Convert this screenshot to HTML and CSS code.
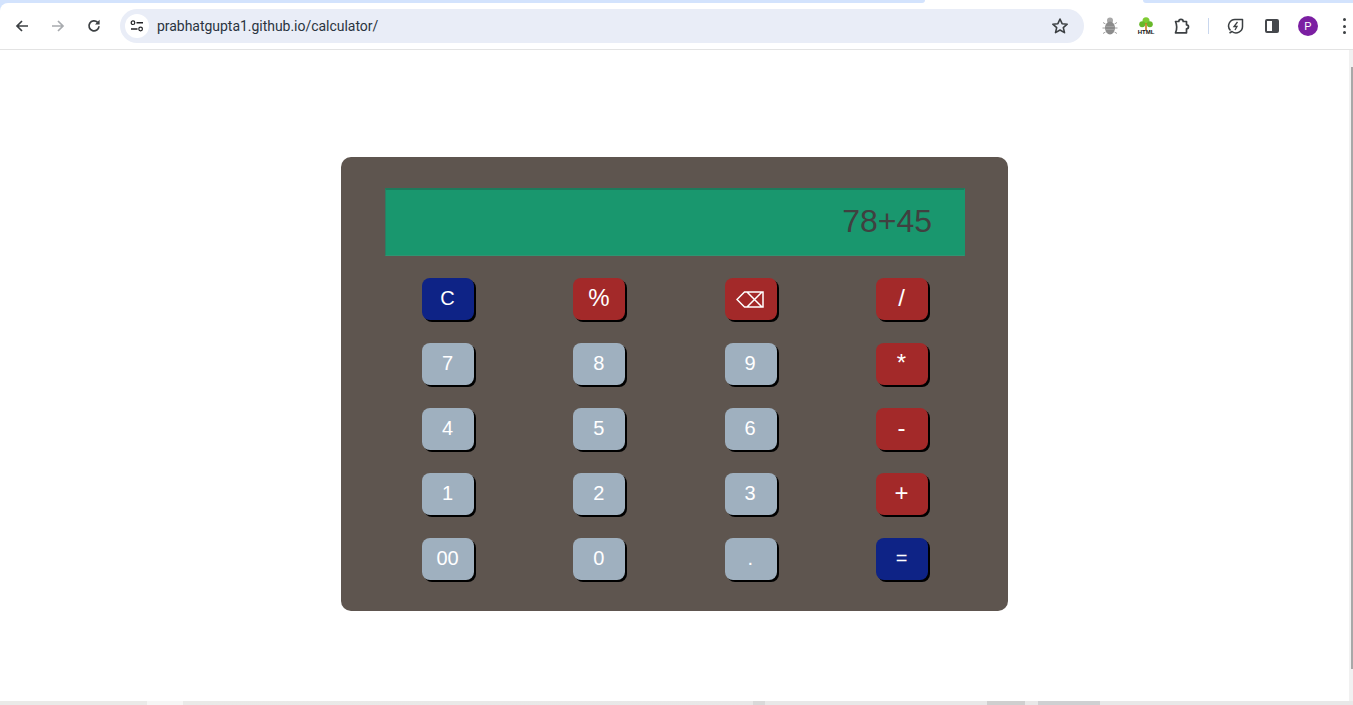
FILE: index.html
```html
<!DOCTYPE html>
<html lang="en">

<head>
    <meta charset="UTF-8">
    <meta name="viewport" content="width=device-width, initial-scale=1.0">
    <title>Calculator</title>
    <link rel="stylesheet" href="styles.css">
</head>

<body>

    <!-- Browser chrome -->
    <div class="chrome">
        <div class="tabstrip">
            <div class="tab-left"></div>
            <div class="tab-active"></div>
            <div class="tab-right"></div>
        </div>

        <div class="toolbar">
            <div class="nav-buttons">
                <svg class="icon" viewBox="0 0 16 16"><path d="M14 8H3M8 3 3 8l5 5" fill="none" stroke="#3c4043" stroke-width="1.7"/></svg>
                <svg class="icon" viewBox="0 0 16 16"><path d="M2 8h11M8 3l5 5-5 5" fill="none" stroke="#a8abaf" stroke-width="1.7"/></svg>
                <svg class="icon" viewBox="0 0 16 16"><path d="M13 8.2A5 5 0 1 1 11.6 4.4" fill="none" stroke="#3c4043" stroke-width="1.7"/><path d="M13.6 1.8v4.6H9z" fill="#3c4043"/></svg>
            </div>
            <div class="omnibox">
                <span class="site-info">
                    <svg viewBox="0 0 14 12" width="14" height="12"><circle cx="3" cy="2.7" r="1.8" fill="none" stroke="#202124" stroke-width="1.2"/><path d="M6.5 2.7h6.5M1 9h6.5" stroke="#202124" stroke-width="1.5"/><circle cx="10.6" cy="9" r="1.8" fill="none" stroke="#202124" stroke-width="1.2"/></svg>
                </span>
                <span class="url">prabhatgupta1.github.io/calculator/</span>
                <svg class="star" viewBox="0 0 18 18"><path d="M9 2l2.1 4.7 5.1.5-3.9 3.4 1.2 5L9 13l-4.5 2.6 1.2-5-3.9-3.4 5.1-.5z" fill="none" stroke="#3c4043" stroke-width="1.6" stroke-linejoin="round"/></svg>
            </div>
            <div class="extensions">
                <svg class="ext-bug" viewBox="0 0 16 20"><circle cx="8" cy="4.5" r="3" fill="#a8a8a8"/><ellipse cx="8" cy="12" rx="5" ry="6.5" fill="#8c8c8c"/><path d="M3.5 8 1 6.5M12.5 8 15 6.5M3 12H.5M13 12h2.5M3.5 16 1 17.5M12.5 16l2.5 1.5" stroke="#a0a0a0" stroke-width="1"/><path d="M3.5 10.5h9M3.2 13.5h9.6" stroke="#a8a8a8" stroke-width=".8"/></svg>
                <svg class="ext-tree" viewBox="0 0 18 18"><circle cx="9" cy="3.8" r="3.5" fill="#7fcb33"/><circle cx="5.2" cy="7.2" r="3" fill="#68b82a"/><circle cx="12.8" cy="7.2" r="3" fill="#68b82a"/><rect x="8.2" y="6" width="1.6" height="7.5" fill="#c77a1b"/><text x="9" y="17" class="tree-label">HTML</text></svg>
                <svg class="ext-puzzle" viewBox="0 0 18 18"><path d="M2.5 4.5h3.3a2.2 2.2 0 0 1 4.4 0h3.3v3.3a2 2 0 0 1 0 4v4H2.5q2.5-5.5 0-11.300z" fill="none" stroke="#3c4043" stroke-width="1.7" stroke-linejoin="round"/></svg>
                <span class="divider"></span>
                <svg class="ext-leaf" viewBox="0 0 18 18"><path d="M3.5 13.500A6.500 6.500 0 0 1 9 2.500h6.500V9A6.500 6.500 0 0 1 5 14.500L2.500 16" fill="none" stroke="#3c4043" stroke-width="1.5" stroke-linejoin="round"/><path d="M10.5 5 7 9.5h3L8 13" fill="none" stroke="#3c4043" stroke-width="1.3"/></svg>
                <span class="side-panel"></span>
                <span class="avatar">P</span>
                <span class="menu-dots"><i></i><i></i><i></i></span>
            </div>
        </div>
    </div>

    <!-- Page -->
    <div class="viewport">
        <div class="page">
            <div class="calculator">
                <div class="display">78+45</div>
                <div class="keys">
                    <button class="key key-blue">C</button>
                    <button class="key key-red key-big">%</button>
                    <button class="key key-red key-big" aria-label="Backspace">
                        <svg class="back-icon" viewBox="0 0 28 17"><path d="M1 8.5 8.5 1H27v15H8.5zM11 1l15 15M26 1 11 16" fill="none" stroke="#fff" stroke-width="1.5"/></svg>
                    </button>
                    <button class="key key-red key-big">/</button>

                    <button class="key">7</button>
                    <button class="key">8</button>
                    <button class="key">9</button>
                    <button class="key key-red key-big">*</button>

                    <button class="key">4</button>
                    <button class="key">5</button>
                    <button class="key">6</button>
                    <button class="key key-red key-big">-</button>

                    <button class="key">1</button>
                    <button class="key">2</button>
                    <button class="key">3</button>
                    <button class="key key-red key-big">+</button>

                    <button class="key">00</button>
                    <button class="key">0</button>
                    <button class="key">.</button>
                    <button class="key key-blue">=</button>
                </div>
            </div>
        </div>
        <div class="scrollbar"><div class="scroll-thumb"></div></div>
    </div>

    <div class="desktop-strip"></div>

</body>

</html>
```

FILE: styles.css
```css
* {
    box-sizing: border-box;
}

body {
    margin: 0;
    height: 705px;
    overflow: hidden;
    display: flex;
    flex-direction: column;
    font-family: "Liberation Sans", Arial, sans-serif;
    background-color: #fff;
}

/* Browser chrome */
.chrome {
    flex: none;
    background: linear-gradient(to right, #d3e3fd 10px, #fff 10px);
}

.tabstrip {
    display: flex;
    height: 3px;
    background-color: #fff;
}

.tab-left {
    width: 925px;
    background-color: #d3e3fd;
    border-bottom-right-radius: 6px;
}

.tab-active {
    width: 218px;
}

.tab-right {
    flex: 1;
    background-color: #d3e3fd;
    border-bottom-left-radius: 6px;
}

.toolbar {
    display: flex;
    align-items: center;
    height: 47px;
    border-bottom: 1px solid #e3e3e3;
    border-top-left-radius: 8px;
    background-color: #fff;
}

.nav-buttons {
    display: flex;
    gap: 20px;
    padding-left: 14px;
    width: 120px;
}

.icon {
    width: 16px;
    height: 16px;
}

.omnibox {
    display: flex;
    align-items: center;
    width: 964px;
    height: 34px;
    padding: 0 15px 0 5px;
    background-color: #e9edf7;
    border-radius: 17px;
}

.site-info {
    display: flex;
    align-items: center;
    justify-content: center;
    width: 24px;
    height: 24px;
    background-color: #fff;
    border-radius: 50%;
}

.url {
    flex: 1;
    margin-left: 8px;
    font-family: Roboto, "Liberation Sans", sans-serif;
    font-size: 14px;
    letter-spacing: -0.03px;
    color: #2b3440;
}

.star {
    width: 18px;
    height: 18px;
}

.extensions {
    display: flex;
    align-items: center;
    flex: 1;
    padding-left: 18px;
}

.ext-bug {
    width: 16px;
    height: 20px;
}

.ext-tree {
    width: 18px;
    height: 18px;
    margin-left: 19px;
}

.tree-label {
    font-family: "Liberation Sans", sans-serif;
    font-size: 6px;
    font-weight: 700;
    text-anchor: middle;
    fill: #111;
}

.ext-puzzle {
    width: 18px;
    height: 18px;
    margin-left: 18px;
}

.divider {
    width: 1px;
    height: 16px;
    margin-left: 17px;
    background-color: #c9d7ee;
}

.ext-leaf {
    width: 18px;
    height: 18px;
    margin-left: 18px;
}

.side-panel {
    width: 14px;
    height: 14px;
    margin-left: 20px;
    border: 2px solid #45484c;
    border-radius: 2px;
    background: linear-gradient(to right, #fff 50%, #45484c 50%);
}

.avatar {
    display: flex;
    align-items: center;
    justify-content: center;
    width: 20px;
    height: 20px;
    margin-left: 19px;
    border-radius: 50%;
    background-color: #7b1fa2;
    color: #fff;
    font-size: 11px;
}

.menu-dots {
    display: flex;
    flex-direction: column;
    gap: 3.5px;
    margin-left: 25px;
}

.menu-dots i {
    display: block;
    width: 3px;
    height: 3px;
    border-radius: 50%;
    background-color: #3c4043;
}

/* Page */
.viewport {
    display: flex;
    flex: 1;
    min-height: 0;
}

.page {
    flex: 1;
    padding-top: 107px;
    padding-left: 341px;
}

.scrollbar {
    display: flex;
    justify-content: flex-end;
    align-items: flex-start;
    width: 4px;
    padding-top: 17px;
    background-color: #f1f1f1;
}

.scroll-thumb {
    width: 2px;
    height: 602px;
    background-color: #a8a8a8;
}

.desktop-strip {
    height: 4px;
    flex: none;
    background: linear-gradient(to right,
            #eaeae8 147px, #f6f6f5 147px, #f6f6f5 183px,
            #eaeae8 183px, #e8e8e8 753px, #d9d9d9 753px, #d9d9d9 765px,
            #e8e8e8 765px, #e8e8e8 987px, #cfcfcf 987px, #cfcfcf 1025px,
            #e8e8e8 1025px, #e8e8e8 1038px, #cfd0d2 1038px, #cfd0d2 1100px,
            #e8e8e8 1100px);
}

/* Calculator */
.calculator {
    width: 667px;
    height: 454px;
    padding: 31px 43px 0 44px;
    background-color: #5e554f;
    border-radius: 10px;
}

.display {
    height: 68px;
    padding-right: 32px;
    background-color: #19976e;
    border-style: solid;
    border-width: 2px 1px 1px 1px;
    border-color: #1d7a5c #19976e #2f9472 #2d7d62;
    color: #404040;
    font-size: 32px;
    line-height: 62px;
    text-align: right;
}

.keys {
    display: grid;
    grid-template-columns: repeat(4, 52px);
    justify-content: space-between;
    row-gap: 23px;
    margin-top: 22px;
    padding: 0 37px;
}

.key {
    display: flex;
    align-items: center;
    justify-content: center;
    width: 52px;
    height: 42px;
    padding: 0 1px 2px 0;
    border: none;
    border-radius: 8px;
    background-color: #9fb0bf;
    box-shadow: 2px 2px 0 #000;
    color: #fff;
    font-family: "Liberation Sans", Arial, sans-serif;
    font-size: 20px;
}

.key-blue {
    background-color: #0e2386;
}

.key-red {
    background-color: #a32929;
}

.key-big {
    font-size: 24px;
}

.back-icon {
    width: 28px;
    height: 17px;
    margin-top: 2px;
}
```
